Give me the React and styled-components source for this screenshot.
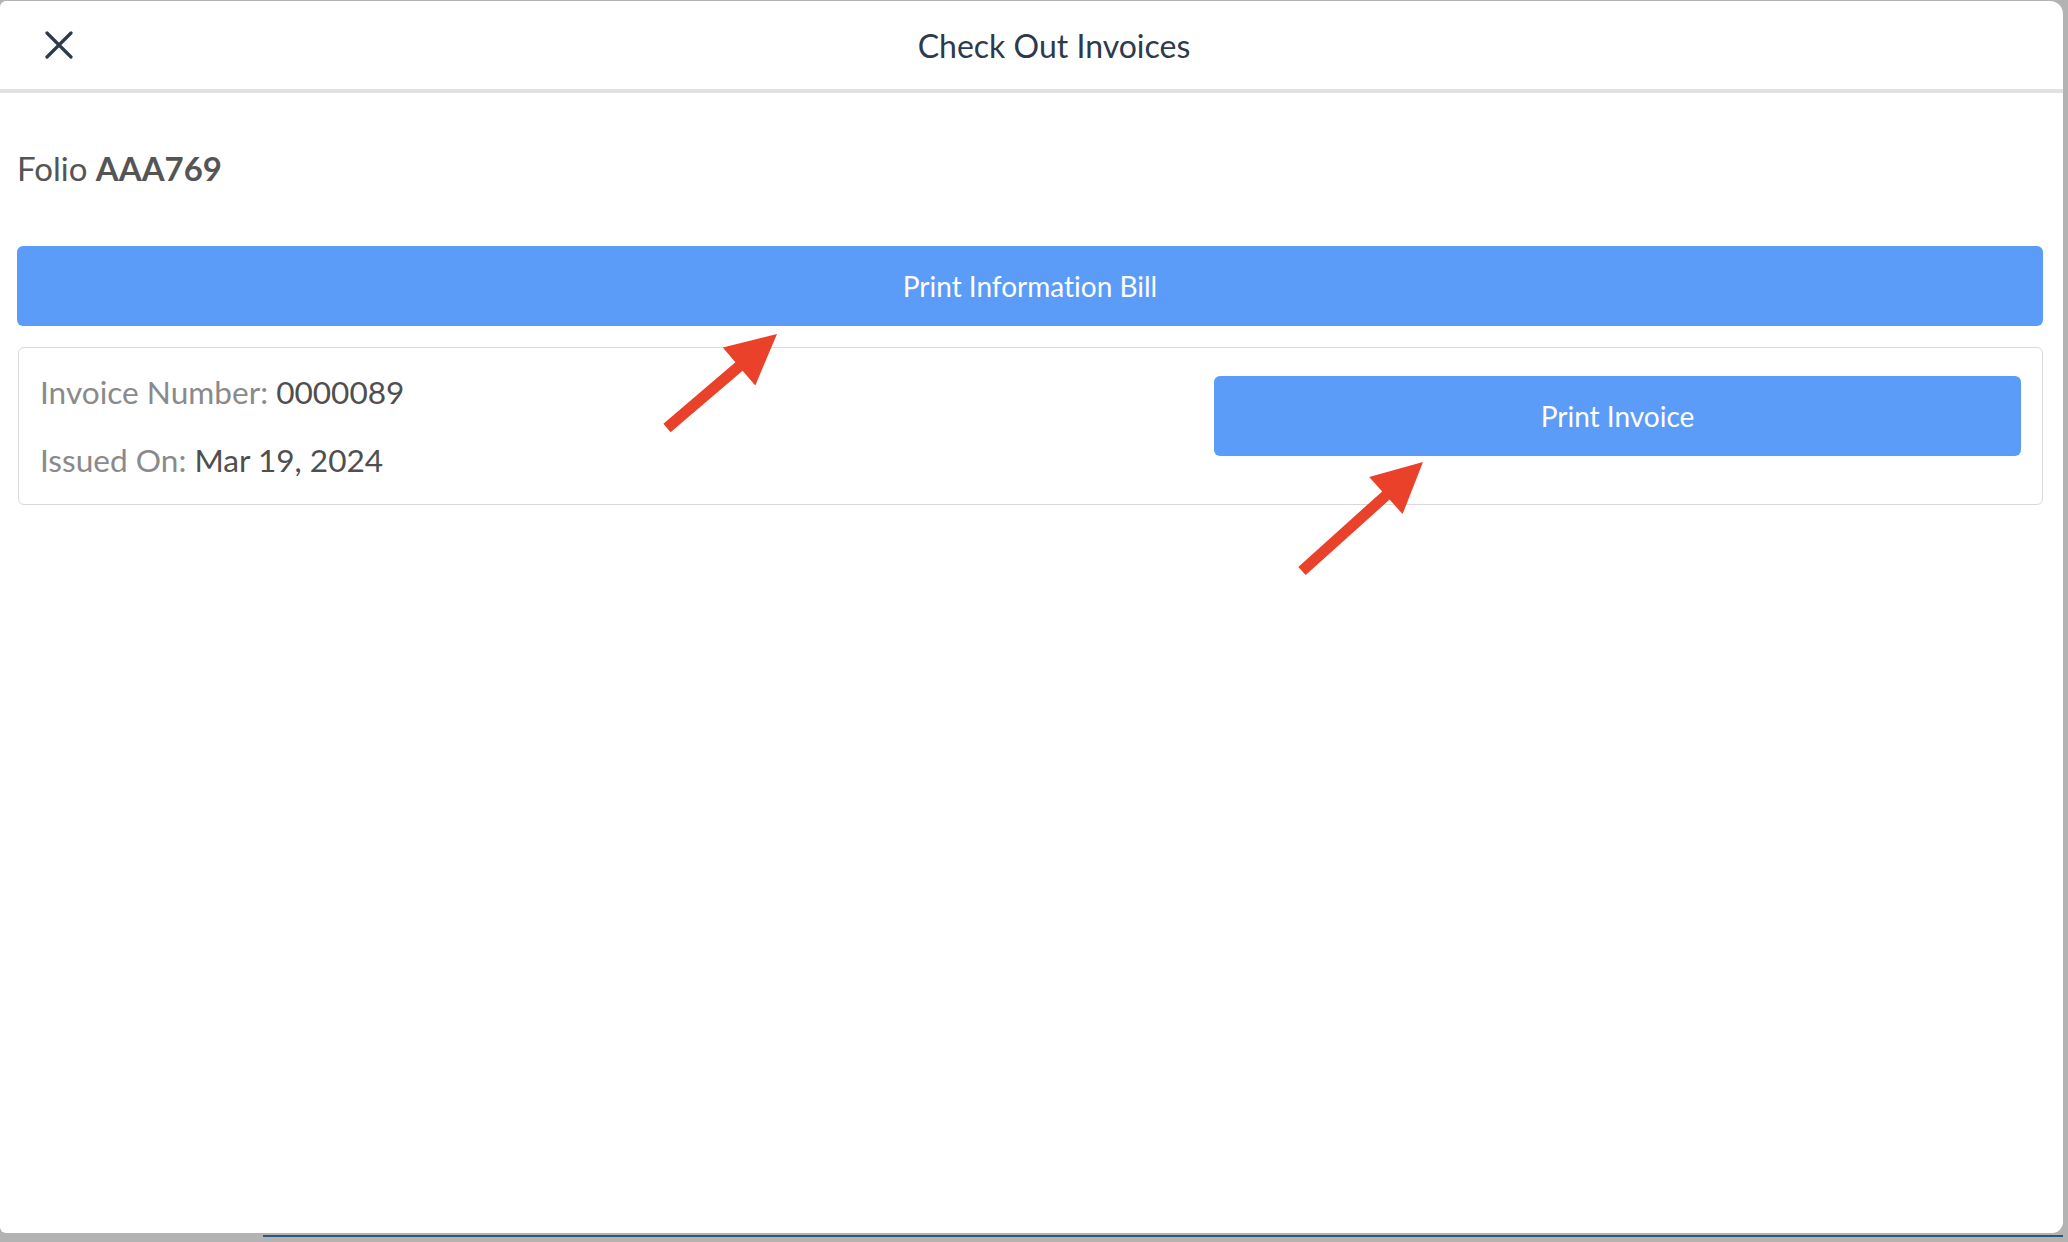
import React from 'react'
import styled, { createGlobalStyle } from 'styled-components'

const GlobalStyle = createGlobalStyle`
  html, body {
    margin: 0;
    padding: 0;
    background: #b3b3b3;
    font-family: Lato, "Open Sans", "Liberation Sans", sans-serif;
    font-variant-ligatures: no-common-ligatures;
  }
  * { box-sizing: border-box; }
`

const Backdrop = styled.div`
  position: relative;
  width: 2068px;
  height: 1242px;
  padding: 1px 5px 0 0;
  overflow: hidden;
`

const Modal = styled.div`
  width: 2063px;
  height: 1232px;
  background: #fff;
  border-radius: 6px 13px 11px 6px;
  display: flex;
  flex-direction: column;
`

const BottomStrip = styled.div`
  margin: 2px 0 0 263px;
  height: 2px;
  background: #2e5877;
`

const Header = styled.div`
  height: 92px;
  flex-shrink: 0;
  display: flex;
  align-items: center;
  padding: 0 28px 0 45px;
  border-bottom: 4px solid #e1e1e1;
`

const CloseButton = styled.button`
  width: 28px;
  height: 28px;
  padding: 0;
  border: none;
  background: none;
  display: flex;
  cursor: pointer;
`

const Title = styled.h1`
  flex: 1;
  margin: 0;
  text-align: center;
  font-size: 32px;
  font-weight: 400;
  color: #2d3a4b;
`

const Body = styled.div`
  padding: 55px 20px 0 17px;
  display: flex;
  flex-direction: column;
`

const Folio = styled.div`
  font-size: 33px;
  color: #555;
  margin-bottom: 58px;

  b {
    font-weight: 700;
  }
`

const PrimaryButton = styled.button`
  height: 80px;
  width: ${p => p.$width || '100%'};
  flex-shrink: 0;
  border: none;
  border-radius: 6px;
  background: #5b9cf8;
  color: #fff;
  font-family: Lato, "Open Sans", "Liberation Sans", sans-serif;
  font-variant-ligatures: no-common-ligatures;
  font-size: 28px;
  font-weight: 400;
  cursor: pointer;
`

const InvoiceCard = styled.div`
  margin-top: 21px;
  margin-left: 1px;
  border: 1.5px solid #d9d9d9;
  border-radius: 6px;
  padding: 24.5px 21px 25px 21px;
  display: flex;
  justify-content: space-between;
  align-items: flex-start;
`

const InvoiceInfo = styled.div`
  display: flex;
  flex-direction: column;
  gap: 30px;
  font-size: 31.6px;
`

const InfoLine = styled.div`
  color: #8a8a8a;

  span {
    color: #4f4f4f;
  }
`

const CardAction = styled.div`
  padding-top: 3.5px;
`

const Annotations = styled.svg`
  position: absolute;
  inset: 0;
  pointer-events: none;
`

const CloseIcon = () => (
  <svg width="28" height="28" viewBox="0 0 28 28">
    <path d="M2 2 L26 26 M26 2 L2 26" stroke="#2d3a4b" strokeWidth="3.2" strokeLinecap="round" fill="none" />
  </svg>
)

export default function App() {
  return (
    <>
      <GlobalStyle />
      <Backdrop>
        <Modal>
          <Header>
            <CloseButton aria-label="Close">
              <CloseIcon />
            </CloseButton>
            <Title>Check Out Invoices</Title>
          </Header>
          <Body>
            <Folio>
              Folio <b>AAA769</b>
            </Folio>
            <PrimaryButton>Print Information Bill</PrimaryButton>
            <InvoiceCard>
              <InvoiceInfo>
                <InfoLine>
                  Invoice Number: <span>0000089</span>
                </InfoLine>
                <InfoLine>
                  Issued On: <span>Mar 19, 2024</span>
                </InfoLine>
              </InvoiceInfo>
              <CardAction>
                <PrimaryButton $width="807px">Print Invoice</PrimaryButton>
              </CardAction>
            </InvoiceCard>
          </Body>
        </Modal>
        <BottomStrip />
        <Annotations width="2068" height="1242" viewBox="0 0 2068 1242">
          <polygon
            fill="#e9412a"
            points="663.4,423.8 735.4,362.3 722.8,347.5 777,334 755.3,385.5 742.6,370.7 670.6,432.2"
          />
          <polygon
            fill="#e9412a"
            points="1298.3,566.9 1382.2,491.4 1369.2,476.9 1423,462 1402.6,514.1 1389.6,499.6 1305.7,575.1"
          />
        </Annotations>
      </Backdrop>
    </>
  )
}
